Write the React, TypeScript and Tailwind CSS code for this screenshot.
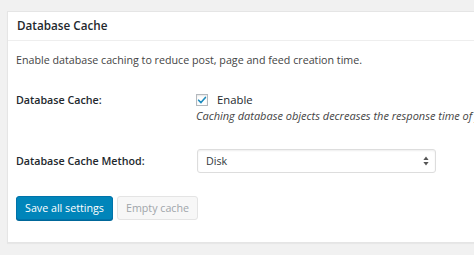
import React from 'react';

const App = () => {
  return (
    <div className="min-h-screen w-[474px] h-[255px] overflow-hidden bg-[#f1f1f1] pt-[11px] pl-[7px] text-[#23282d]" style={{ fontFamily: '"Open Sans", sans-serif' }}>
      <div className="w-[480px] h-[232px] bg-white border border-[#e5e5e5] shadow-[0_1px_1px_rgba(0,0,0,0.04)]">
        {/* header */}
        <div className="h-[29px] flex items-center pl-[9px] border-b border-[#eeeeee]">
          <h2 className="text-[11.7px] font-semibold leading-none">Database Cache</h2>
        </div>

        <div className="pl-[8px]">
          <p className="mt-[11px] text-[10.7px] leading-[16px] text-[#444] whitespace-nowrap">
            Enable database caching to reduce post, page and feed creation time.
          </p>

          {/* enable row */}
          <div className="flex mt-[22px]">
            <div className="w-[180px] shrink-0 pt-[2px] text-[10.7px] leading-[16px] font-semibold text-[#23282d] whitespace-nowrap">Database Cache:</div>
            <div className="flex flex-col">
              <label className="flex items-center gap-[9px] h-[16px] mt-[2px]">
                <span className="w-[12px] h-[12px] border border-[#b4b9be] bg-white shadow-[inset_0_1px_2px_rgba(0,0,0,0.1)] flex items-center justify-center">
                  <svg width="10" height="10" viewBox="0 0 10 10">
                    <path d="M1.6 5.2 L4 7.6 L8.4 2.4" fill="none" stroke="#1e8cbe" strokeWidth="1.6" strokeLinecap="round" strokeLinejoin="round" />
                  </svg>
                </span>
                <span className="text-[11.3px] text-[#23282d]">Enable</span>
              </label>
              <p className="text-[11px] italic text-[#444] whitespace-nowrap leading-[16px]">
                Caching database objects decreases the response time of your site.
              </p>
            </div>
          </div>

          {/* method row */}
          <div className="flex items-center mt-[25px]">
            <div className="w-[181px] shrink-0 text-[10.7px] font-semibold text-[#23282d] whitespace-nowrap">Database Cache Method:</div>
            <div className="w-[239px] h-[24px] border border-[#ddd] rounded-[3px] bg-white shadow-[inset_0_1px_2px_rgba(0,0,0,0.07)] flex items-center justify-between pl-[8px] pr-[6px]">
              <span className="text-[10.7px] text-[#32373c]">Disk</span>
              <svg width="6" height="10" viewBox="0 0 6 10">
                <path d="M3 0.5 L5.6 4 H0.4 Z" fill="#555" />
                <path d="M3 9.5 L5.6 6 H0.4 Z" fill="#555" />
              </svg>
            </div>
          </div>

          {/* buttons */}
          <div className="flex gap-[4px] mt-[23px]">
            <button className="h-[24px] w-[97px] bg-[#0085ba] border border-[#0073aa] rounded-[3px] text-white text-[10.7px] leading-none shadow-[0_1px_0_#006799]">
              Save all settings
            </button>
            <button className="h-[24px] w-[81px] bg-[#f7f7f7] border border-[#e4e4e4] rounded-[3px] text-[#a0a5aa] text-[10.7px] leading-none">
              Empty cache
            </button>
          </div>
        </div>
      </div>
    </div>
  );
};

export default App;
